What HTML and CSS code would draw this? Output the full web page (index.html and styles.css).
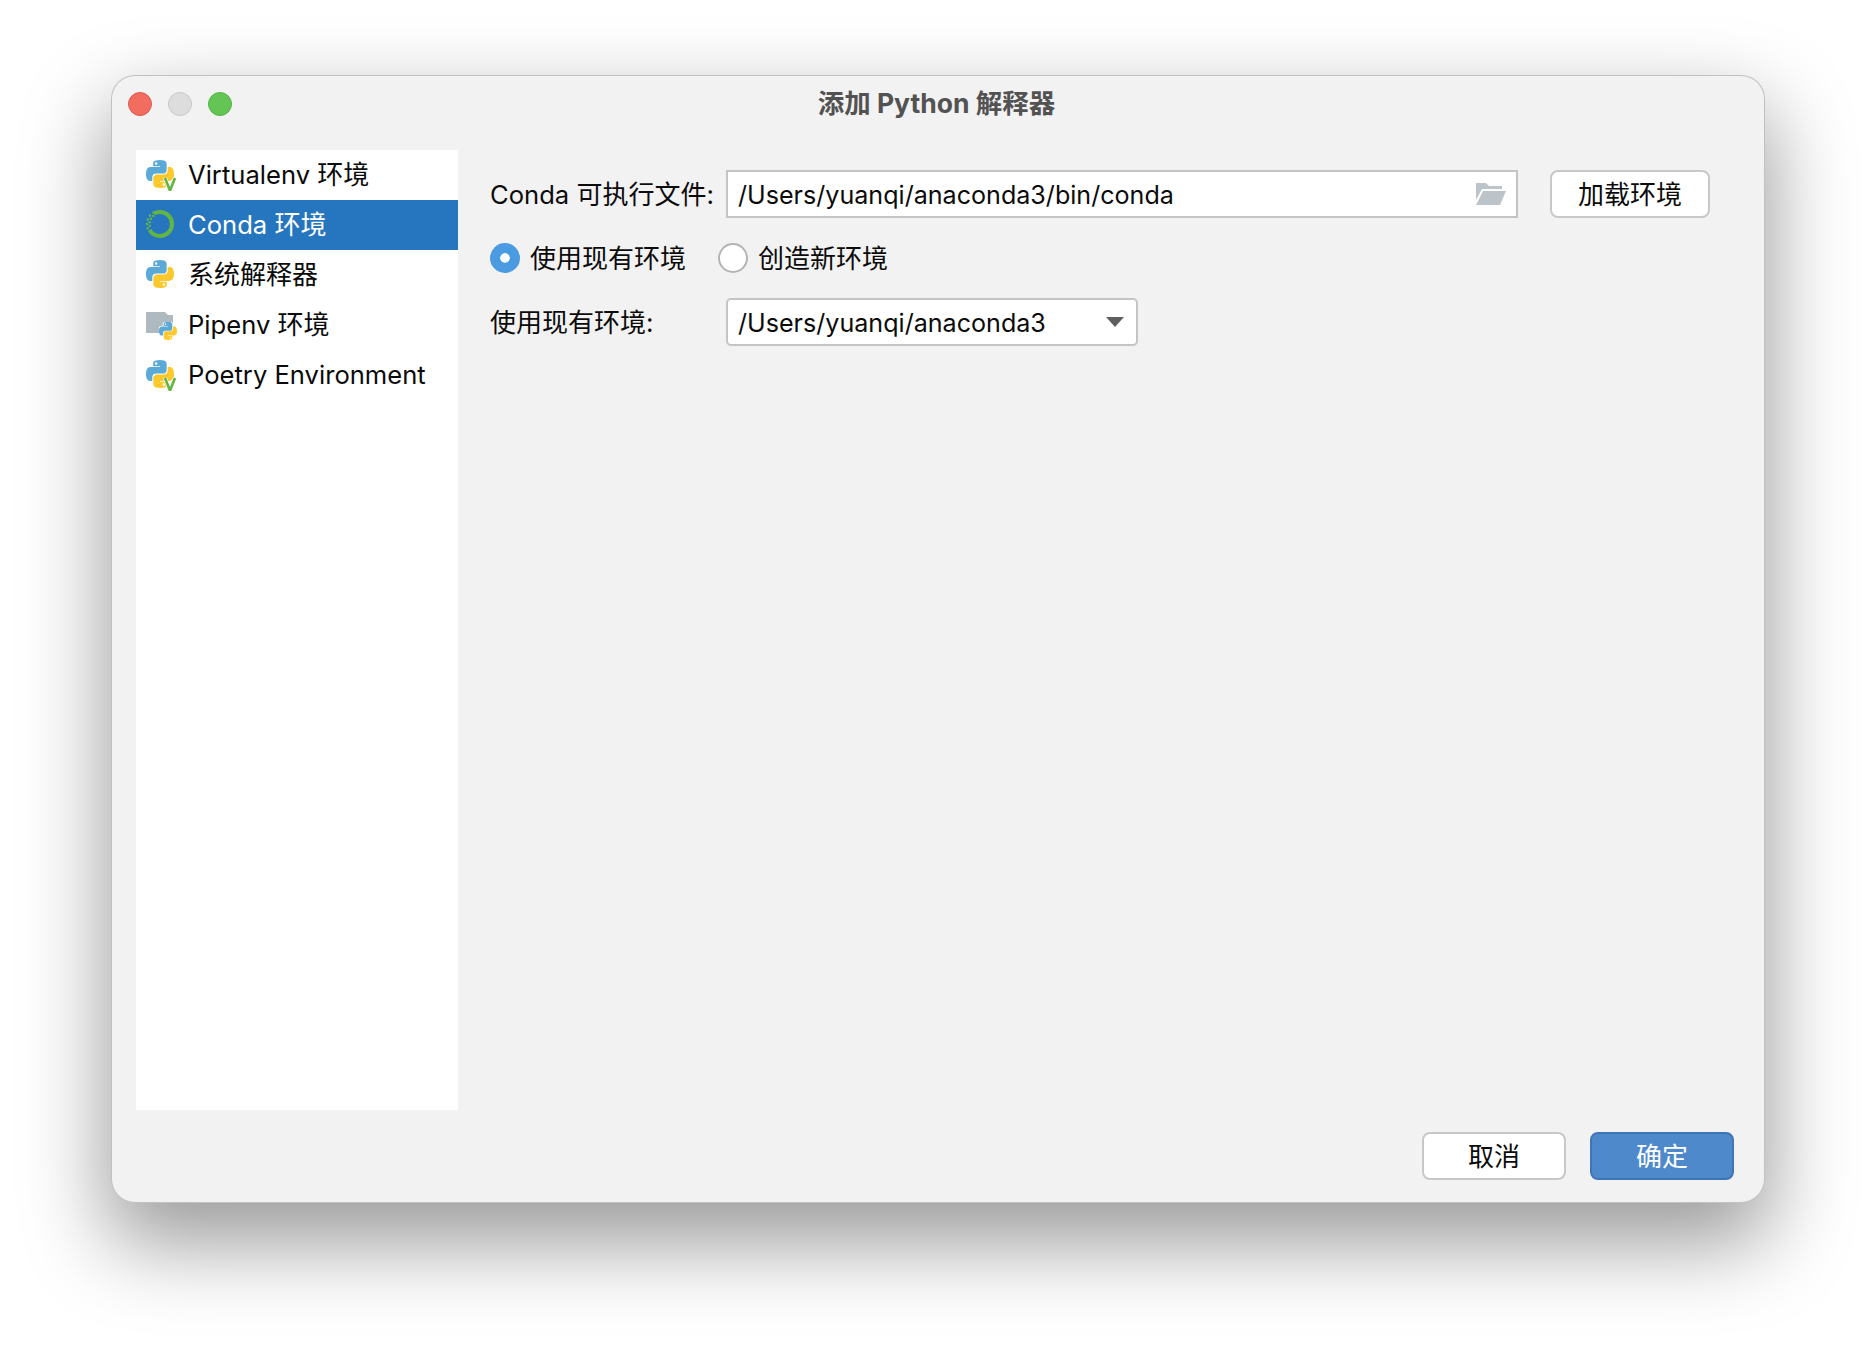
FILE: index.html
```html
<!DOCTYPE html>
<html lang="zh-CN">
<head>
<meta charset="utf-8">
<title>添加 Python 解释器</title>
<link rel="stylesheet" href="styles.css">
</head>
<body>
<svg class="defs" width="0" height="0" aria-hidden="true">
  <symbol id="py" viewBox="0 0 24 24">
    <path fill="#5aa9d6" fill-rule="evenodd" d="M11.9 0C5.8 0 6.2 2.6 6.2 2.6v2.7h5.8v.8H3.9S0 5.7 0 11.9s3.4 6 3.4 6h2v-2.9s-.1-3.4 3.4-3.4h5.7s3.2.1 3.2-3.1V3.2S18.3 0 11.9 0zM8.7 1.9a1 1 0 110 2.1 1 1 0 010-2.1z"/>
    <path fill="#fbc82d" fill-rule="evenodd" d="M12.1 24c6.1 0 5.7-2.6 5.7-2.6v-2.7H12v-.8h8.1s3.9.4 3.9-5.8-3.4-6-3.4-6h-2v2.9s.1 3.4-3.4 3.4H9.5s-3.2-.1-3.2 3.1v5.3S5.7 24 12.1 24zm3.2-1.9a1 1 0 110-2.1 1 1 0 010 2.1z"/>
  </symbol>
  <symbol id="pyv" viewBox="0 0 32 32">
    <use href="#py" x="0" y="1" width="28" height="28"/>
    <path fill="none" stroke="#fff" stroke-width="4" d="M19 19l5 12.5 5-12.5"/>
    <path fill="none" stroke="#62b543" stroke-width="2.6" d="M19 19l5 12.5 5-12.5"/>
  </symbol>
</svg>
<main class="window">
  <header class="titlebar">
    <div class="lights">
      <span class="light light-red"></span>
      <span class="light light-gray"></span>
      <span class="light light-green"></span>
    </div>
    <h1 class="title">添加 Python 解释器</h1>
  </header>
  <div class="body">
    <nav class="sidebar">
      <div class="item">
        <svg class="icon" viewBox="0 0 32 32"><use href="#pyv"/></svg>
        <span class="latin">Virtualenv <span class="cjk">环境</span></span>
      </div>
      <div class="item item-active">
        <svg class="icon" viewBox="0 0 32 32">
          <circle class="ring" cx="14" cy="15" r="12" pathLength="100" stroke-dasharray="75 25" stroke-dashoffset="-66.7"/>
          <g class="ring-dots">
            <rect x=".7" y="18.3" width="2.2" height="2.2"/>
            <rect x="-.1" y="13.9" width="2.2" height="2.2"/>
            <rect x=".7" y="9.5" width="2.2" height="2.2"/>
            <rect x="2.9" y="5.5" width="2.2" height="2.2"/>
            <rect x="2.6" y="15.7" width="2.2" height="2.2"/>
            <rect x="2.6" y="12.1" width="2.2" height="2.2"/>
            <rect x="3.8" y="8.7" width="2.2" height="2.2"/>
            <rect x="6.2" y="5.9" width="2.2" height="2.2"/>
            <rect x="6.4" y="2.6" width="2.2" height="2.2"/>
          </g>
        </svg>
        <span class="latin">Conda <span class="cjk">环境</span></span>
      </div>
      <div class="item">
        <svg class="icon" viewBox="0 0 32 32"><use href="#py" width="28" height="28" x="0" y="1"/></svg>
        <span>系统解释器</span>
      </div>
      <div class="item">
        <svg class="icon" viewBox="0 0 32 32">
          <path fill="#afb9c0" d="M0 3h19l3 3h5v18H0z"/>
          <use class="halo" href="#py" x="13" y="13" width="18" height="18"/>
          <use href="#py" x="13" y="13" width="18" height="18"/>
        </svg>
        <span class="latin">Pipenv <span class="cjk">环境</span></span>
      </div>
      <div class="item">
        <svg class="icon" viewBox="0 0 32 32"><use href="#pyv"/></svg>
        <span class="latin">Poetry Environment</span>
      </div>
    </nav>
    <section class="content">
      <div class="row row-path">
        <label class="label"><span class="latin">Conda </span>可执行文件:</label>
        <div class="input input-path">
          <span class="path">/Users/yuanqi/anaconda3/bin/conda</span>
          <svg class="folder" viewBox="0 0 30 22">
            <path fill="#bcc4ca" d="M0 0h10l3 3h13v3H6L0 17z"/>
            <path fill="#bcc4ca" d="M7 8h23l-6 14H0z"/>
          </svg>
        </div>
        <button class="btn btn-load">加载环境</button>
      </div>
      <div class="row row-radio">
        <span class="radio radio-on"></span>
        <span class="radio-text">使用现有环境</span>
        <span class="radio"></span>
        <span class="radio-text">创造新环境</span>
      </div>
      <div class="row row-select">
        <label class="label">使用现有环境:</label>
        <div class="input select">
          <span class="path">/Users/yuanqi/anaconda3</span>
          <span class="caret"></span>
        </div>
      </div>
    </section>
  </div>
  <footer class="footer">
    <button class="btn btn-cancel">取消</button>
    <button class="btn btn-ok">确定</button>
  </footer>
</main>
</body>
</html>
```

FILE: styles.css
```css
* { box-sizing: border-box; }
html, body { margin: 0; height: 100%; }
body {
  background: #fff;
  padding: 75px 111px 147px;
  font-family: Inter, "Noto Sans CJK SC", sans-serif;
  font-size: 26px;
  line-height: 30px;
  color: #0b0b0b;
  overflow: hidden;
}
.defs { position: absolute; }
.latin { font-size: 25.6px; }
.cjk { font-size: 26px; }
.path { font-size: 25.1px; padding-top: 1px; }
.window {
  width: 1654px;
  height: 1128px;
  background: #f2f2f2;
  border-radius: 24px;
  display: flex;
  flex-direction: column;
  box-shadow: inset 0 0 0 1px rgba(0,0,0,.2), 0 36px 84px 4px rgba(0,0,0,.4);
}
.titlebar {
  height: 75px;
  display: flex;
  align-items: flex-start;
  position: relative;
  flex: none;
}
.lights { display: flex; gap: 16px; padding: 17px 0 0 17px; }
.light { width: 24px; height: 24px; border-radius: 50%; border: 1px solid; }
.light-red { background: #f26c60; border-color: #dc5b50; }
.light-gray { background: #dddddd; border-color: #c8c8c8; }
.light-green { background: #62c554; border-color: #55b548; }
.title {
  position: absolute;
  left: 0;
  right: 0;
  top: 13px;
  margin: 0;
  padding-right: 3px;
  text-align: center;
  font-size: 26.5px;
  line-height: 30px;
  font-weight: 700;
  color: #525252;
}
.body { flex: 1; display: flex; padding: 0 25px; min-height: 0; }
.sidebar { width: 322px; background: #fff; flex: none; }
.item {
  height: 50px;
  display: flex;
  align-items: center;
  gap: 10px;
  padding-left: 10px;
}
.item-active { background: #2675bf; color: #fff; }
.icon { width: 32px; height: 32px; flex: none; overflow: visible; }
.halo { stroke: #fff; stroke-width: 2.4; }
.ring { fill: none; stroke: #62b543; stroke-width: 4; }
.ring-dots { fill: #62b543; }
.content { flex: 1; padding: 20px 0 0 32px; }
.row { display: flex; align-items: center; }
.row-path { height: 48px; }
.row-radio { height: 48px; margin-top: 16px; }
.row-select { height: 48px; margin-top: 16px; }
.label { width: 236px; flex: none; padding-top: 2px; }
.input {
  height: 48px;
  background: #fff;
  border: 2px solid #c4c4c4;
  padding: 0 10px;
  display: flex;
  align-items: center;
  justify-content: space-between;
}
.input-path { width: 792px; }
.folder { width: 30px; height: 22px; }
.select { width: 412px; border-radius: 5px; padding-right: 12px; }
.caret {
  width: 0; height: 0;
  border-left: 9px solid transparent;
  border-right: 9px solid transparent;
  border-top: 10px solid #5f5f5f;
}
.radio {
  width: 30px; height: 30px;
  border-radius: 50%;
  background: #fff;
  border: 2px solid #b4b4b4;
  flex: none;
}
.radio-on { background: #4b9be2; border: 10px solid #4b9be2; box-shadow: inset 0 0 0 10px #fff; }
.radio-text { margin-left: 10px; margin-right: 32px; padding-top: 2px; }
.btn {
  height: 48px;
  font: inherit;
  color: inherit;
  background: #fff;
  border: 2px solid #c8c8c8;
  border-radius: 8px;
  padding: 2px 0 0;
}
.btn-load { width: 160px; margin-left: 32px; }
.footer {
  height: 93px;
  flex: none;
  display: flex;
  justify-content: flex-end;
  gap: 24px;
  padding: 22px 31px 0 0;
}
.btn-cancel, .btn-ok { width: 144px; }
.btn-ok { background: #4d89cb; border-color: #4076b5; color: #fff; }
```
